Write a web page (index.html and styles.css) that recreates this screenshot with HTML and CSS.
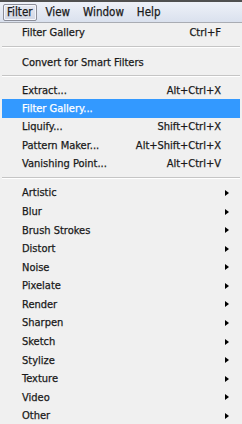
FILE: index.html
```html
<!DOCTYPE html>
<html>
<head>
<meta charset="utf-8">
<link rel="stylesheet" href="styles.css">
</head>
<body>
<div class="topline"></div>
<div class="menubar">
  <span class="mb-item active">Filter</span>
  <span class="mb-item">View</span>
  <span class="mb-item">Window</span>
  <span class="mb-item">Help</span>
</div>
<div class="menu">
  <div class="item first"><span>Filter Gallery</span><span class="key">Ctrl+F</span></div>
  <div class="sep sep1"></div>
  <div class="item first"><span>Convert for Smart Filters</span></div>
  <div class="sep sep2"></div>
  <div class="item mid"><span>Extract...</span><span class="key">Alt+Ctrl+X</span></div>
  <div class="item mid hl"><span>Filter Gallery...</span></div>
  <div class="item mid"><span>Liquify...</span><span class="key">Shift+Ctrl+X</span></div>
  <div class="item mid"><span>Pattern Maker...</span><span class="key">Alt+Shift+Ctrl+X</span></div>
  <div class="item mid"><span>Vanishing Point...</span><span class="key">Alt+Ctrl+V</span></div>
  <div class="sep sep3"></div>
  <div class="item sub"><span>Artistic</span><i class="arrow"></i></div>
  <div class="item sub"><span>Blur</span><i class="arrow"></i></div>
  <div class="item sub"><span>Brush Strokes</span><i class="arrow"></i></div>
  <div class="item sub"><span>Distort</span><i class="arrow"></i></div>
  <div class="item sub"><span>Noise</span><i class="arrow"></i></div>
  <div class="item sub"><span>Pixelate</span><i class="arrow"></i></div>
  <div class="item sub"><span>Render</span><i class="arrow"></i></div>
  <div class="item sub"><span>Sharpen</span><i class="arrow"></i></div>
  <div class="item sub"><span>Sketch</span><i class="arrow"></i></div>
  <div class="item sub"><span>Stylize</span><i class="arrow"></i></div>
  <div class="item sub"><span>Texture</span><i class="arrow"></i></div>
  <div class="item sub"><span>Video</span><i class="arrow"></i></div>
  <div class="item sub"><span>Other</span><i class="arrow"></i></div>
</div>
</body>
</html>
```

FILE: styles.css
```css
html, body {
  margin: 0;
  padding: 0;
}
body {
  width: 242px;
  height: 424px;
  overflow: hidden;
  background: #f0f0f0;
  font-family: "DejaVu Sans Condensed", "DejaVu Sans", sans-serif;
  font-stretch: condensed;
  font-size: 11px;
  color: #1a1a1a;
  -webkit-text-stroke: 0.25px #1a1a1a;
}
.topline {
  height: 2px;
  background: #505050;
}
.menubar {
  height: 20px;
  display: flex;
  align-items: center;
  padding-left: 3px;
  gap: 5px;
  font-size: 11.5px;
  background: linear-gradient(#eef1f8, #dae1ee);
  border-bottom: 1px solid #a9acb3;
}
.mb-item {
  padding: 0 3px;
  height: 17px;
  line-height: 15px;
  box-sizing: border-box;
  border: 1px solid transparent;
  border-radius: 2px;
}
.mb-item.active {
  border-color: #8c8e99;
  background: linear-gradient(#e6e9f2, #d2d7e4);
  box-shadow: inset 0 0 0 1px #f4f6fb;
}
.menu {
  display: flex;
  flex-direction: column;
}
.item {
  display: flex;
  align-items: center;
  justify-content: space-between;
  padding-left: 20px;
  padding-right: 19px;
  margin: 0 2px;
  box-sizing: border-box;
}
.item.first { height: 18px; }
.item.mid { height: 18.4px; }
.item.sub { height: 18.58px; padding-right: 11px; }
.item.hl {
  background: #3399ff;
  color: #fff;
  -webkit-text-stroke: 0.25px #fff;
}
.sep {
  margin: 0 2px;
  border-top: 1px solid #c5c5c5;
  border-bottom: 1px solid #ffffff;
  box-sizing: border-box;
}
.sep1 { height: 2px; margin-top: 5px; margin-bottom: 5px; }
.sep2 { height: 2px; margin-top: 4px; margin-bottom: 4px; }
.sep3 { height: 2px; margin-top: 4px; margin-bottom: 4.7px; }
.arrow {
  width: 0;
  height: 0;
  border-left: 4px solid #000;
  border-top: 3.5px solid transparent;
  border-bottom: 3.5px solid transparent;
}
```
